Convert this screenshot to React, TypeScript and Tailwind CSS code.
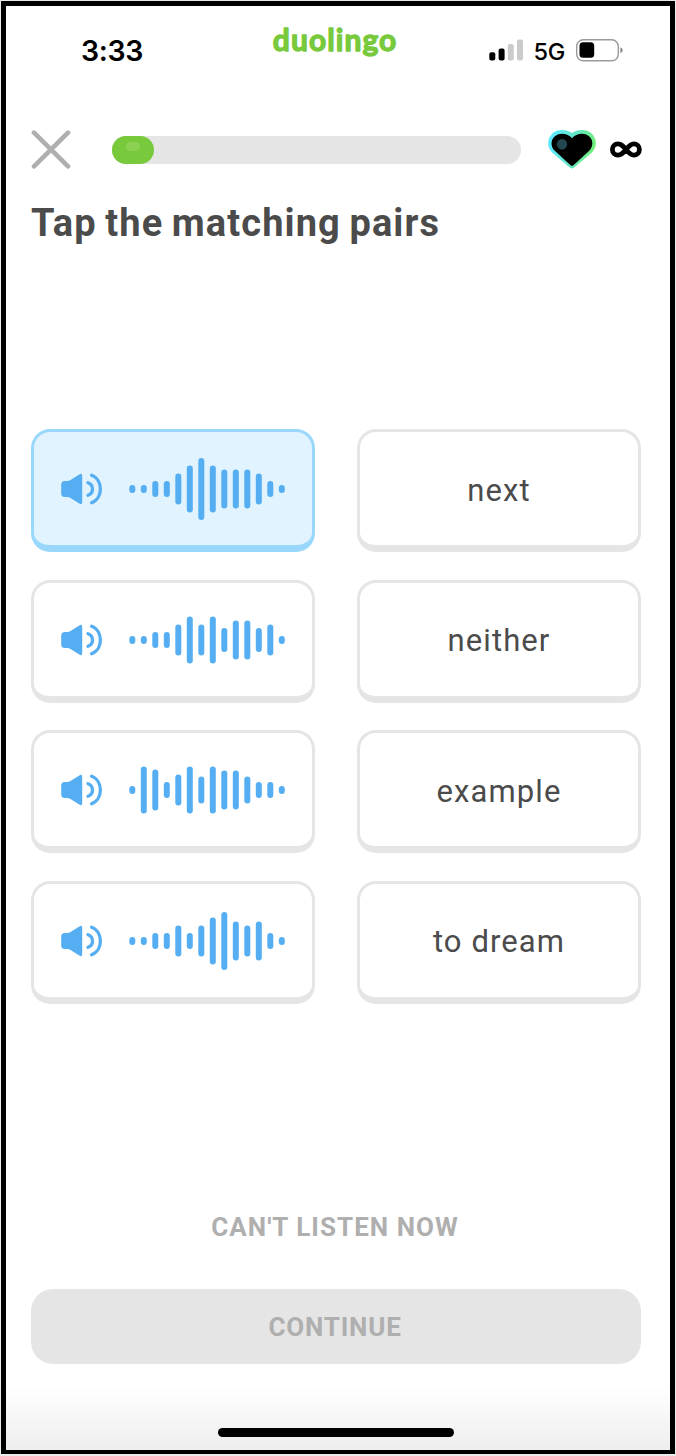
import React from "react";

type Pair = { levels: number[]; word: string; selected?: boolean };

const pairs: Pair[] = [
  { levels: [8, 8, 16, 16, 31, 47, 62, 47, 39, 39, 39, 31, 16, 8], word: "next", selected: true },
  { levels: [8, 8, 16, 16, 31, 47, 31, 47, 24, 39, 39, 24, 31, 8], word: "neither" },
  { levels: [8, 47, 41, 16, 31, 47, 27, 47, 39, 39, 27, 16, 16, 8], word: "example" },
  { levels: [8, 8, 16, 16, 31, 16, 31, 47, 58, 39, 31, 39, 16, 8], word: "to dream" },
];

function Speaker() {
  return (
    <svg className="h-8 w-[42px] shrink-0" viewBox="0 0 42 32" fill="none">
      <path
        d="M4 8H6.5Q8 8 9.5 7L18.3 1.4Q21.2 -.2 21.2 2.6V29.4Q21.2 32.2 18.3 30.6L9.5 25Q8 24 6.5 24H4Q.2 24 .2 20.5V11.5Q.2 8 4 8Z"
        fill="#55aef2"
      />
      <path d="M27 9.7C33 12 33 20 27 22.3" stroke="#55aef2" strokeWidth="3.3" strokeLinecap="round" />
      <path d="M30.6 2.2C42.3 6.5 42.3 25.5 30.6 29.8" stroke="#55aef2" strokeWidth="3.3" strokeLinecap="round" />
    </svg>
  );
}

function Wave({ levels }: { levels: number[] }) {
  return (
    <svg className="h-16 w-[156px] shrink-0" viewBox="0 0 156 64">
      {levels.map((h, i) => (
        <rect key={i} x={0.3 + i * 11.5} y={32 - h / 2} width="6" height={h} rx="3" fill="#55aef2" />
      ))}
    </svg>
  );
}

function StatusBar() {
  return (
    <div className="flex h-[122px] shrink-0 items-start justify-between pl-[75px] pr-[47px]">
      <div className="w-[150px] pt-[31px] font-['Inter',sans-serif] text-[28.5px] leading-[28px] font-semibold tracking-[-0.4px] text-black">
        3:33
      </div>
      <svg className="mt-[15px] mr-[66px] ml-[15px] h-[46px] w-[140px] shrink-0" viewBox="0 0 140 46">
        <text
          x="8.8"
          y="29.6"
          textLength="123.5"
          lengthAdjust="spacing"
          fill="#78c93c"
          stroke="#78c93c"
          strokeWidth="1.3"
          strokeLinejoin="round"
          className="font-['Lato',sans-serif] text-[30px] font-bold"
        >
          duolingo
        </text>
      </svg>
      <div className="flex items-center gap-[11px] pt-[30px]">
        <svg className="h-[23px] w-[34px]" viewBox="0 0 34 23">
          <rect x="0.3" y="14.3" width="6" height="8.3" rx="2" fill="#000" />
          <rect x="9.6" y="10.4" width="6" height="12.2" rx="2" fill="#000" />
          <rect x="18.8" y="6" width="6" height="16.6" rx="2" fill="#cbcbcb" />
          <rect x="28" y="1.4" width="6" height="21.2" rx="2" fill="#cbcbcb" />
        </svg>
        <span className="pt-1 font-['Inter',sans-serif] text-[23.5px] leading-[23px] font-medium tracking-[-0.3px] text-black">5G</span>
        <svg className="mt-0.5 h-[23px] w-[47px]" viewBox="0 0 47 23">
          <rect x="0.7" y="0.8" width="41.6" height="21" rx="6.5" fill="#fff" stroke="#9b9b9b" strokeWidth="1.4" />
          <rect x="3.5" y="3.3" width="14.7" height="15.4" rx="3.5" fill="#000" />
          <path d="M44.3 8.2Q46.7 9 46.7 11.2T44.3 14.2Z" fill="#8b8b8b" />
        </svg>
      </div>
    </div>
  );
}

function LessonHeader() {
  return (
    <div className="flex h-[43px] shrink-0 items-center pl-[25px] pr-[28px]">
      <svg className="h-10 w-10 shrink-0" viewBox="0 0 40 40">
        <path d="M3 2.7L37 36.3M37 2.7L3 36.3" stroke="#afafaf" strokeWidth="4.7" strokeLinecap="round" />
      </svg>
      <div className="ml-[41px] h-7 w-[409px] shrink-0 rounded-full bg-[#e5e5e5]">
        <div className="h-7 w-[42px] rounded-full bg-[#78c93c] pt-1.5 pl-3.5">
          <div className="h-[9px] w-[14px] rounded-full bg-[#8dd152]" />
        </div>
      </div>
      <svg className="ml-[27px] h-10 w-12 shrink-0" viewBox="0 0 48 40">
        <defs>
          <linearGradient id="rim" x1="0" x2="1" y1="0.4" y2="0.6">
            <stop offset="0" stopColor="#5eeafa" />
            <stop offset="0.5" stopColor="#61e6c8" />
            <stop offset="1" stopColor="#70ee7a" />
          </linearGradient>
        </defs>
        <path
          d="M24 35.5L6.3 20.5C-.5 12.5 5 3.4 13.5 3.1C18 3 21.5 4.5 24 7.2C26.5 4.5 30 3 34.5 3.1C43 3.4 48.5 12.5 41.7 20.5Z"
          fill="url(#rim)"
          stroke="url(#rim)"
          strokeWidth="6"
          strokeLinejoin="round"
        />
        <path
          d="M22.6 35.2L6.5 20.6C0 12.8 5.4 3.9 13.5 3.7C18 3.6 21.5 5.2 24 8.2C26.5 5.2 30 3.6 34.5 3.7C42.6 3.9 48 12.8 41.5 20.6L25.4 35.2Q24 36.4 22.6 35.2Z"
          fill="#000"
        />
        <circle cx="14" cy="14.3" r="5.2" fill="#24464f" />
      </svg>
      <svg className="ml-[14px] h-[17px] w-8 shrink-0" viewBox="0 0 32 17" fill="none">
        <path
          d="M16 8.5C12.5 4.2 11 2.9 8 2.9A5.6 5.6 0 0 0 8 14.1C11 14.1 12.5 12.8 16 8.5C19.5 4.2 21 2.9 23.8 2.9A5.6 5.6 0 0 1 23.8 14.1C21 14.1 19.5 12.8 16 8.5Z"
          stroke="#000"
          strokeWidth="4.8"
        />
      </svg>
    </div>
  );
}

const cardBase = "flex h-[123px] w-full items-center rounded-[19px] border-[3px] border-b-[7px] ";

export default function App() {
  return (
    <div className="h-[1456px] w-[676px] bg-[#e8ece9] pt-px pr-px pb-[2px] pl-px">
      <div className="flex h-full flex-col border-[5px] border-b-4 border-black bg-white font-['Roboto',sans-serif]">
        <StatusBar />
        <LessonHeader />
        <h1 className="mt-[33px] ml-[25px] text-[38px] leading-[38px] font-bold tracking-[1.1px] [word-spacing:-2px] whitespace-nowrap text-[#4b4b4b]">
          Tap the matching pairs
        </h1>
        <div className="mt-[187px] flex flex-col gap-[27.6px] pr-[29px] pl-[25px]">
          {pairs.map((p) => (
            <div key={p.word} className="grid grid-cols-2 gap-[42px]">
              <button
                className={
                  cardBase +
                  "gap-[26px] pt-px pl-[27px] " +
                  (p.selected ? "border-[#99d7fd] bg-[#e0f3fe]" : "border-[#e5e5e5] bg-white")
                }
              >
                <Speaker />
                <Wave levels={p.levels} />
              </button>
              <button
                className={
                  cardBase +
                  "justify-center border-[#e5e5e5] bg-white pt-[3px] text-[31px] leading-[31px] tracking-[1.1px] text-[#4b4b4b]"
                }
              >
                {p.word}
              </button>
            </div>
          ))}
        </div>
        <div className="flex grow flex-col items-center justify-end pr-[29px] pl-[25px]">
          <button className="mr-[2px] mb-[49px] text-[26px] leading-[26px] font-bold tracking-[1.02px] text-[#afafaf]">
            CAN'T LISTEN NOW
          </button>
          <button className="flex h-[75px] w-full shrink-0 items-center justify-center rounded-[22px] bg-[#e5e5e5] pr-[2px] text-[26px] leading-[26px] font-bold tracking-[0.8px] text-[#afafaf]">
            CONTINUE
          </button>
          <div className="mt-[22px] -mr-[29px] -ml-[25px] flex h-[64px] shrink-0 items-end justify-center self-stretch bg-linear-to-b from-white to-[#eeeeee] pb-[13.5px]">
            <div className="mr-[4px] h-[9px] w-[236px] rounded-full bg-black" />
          </div>
        </div>
      </div>
    </div>
  );
}
